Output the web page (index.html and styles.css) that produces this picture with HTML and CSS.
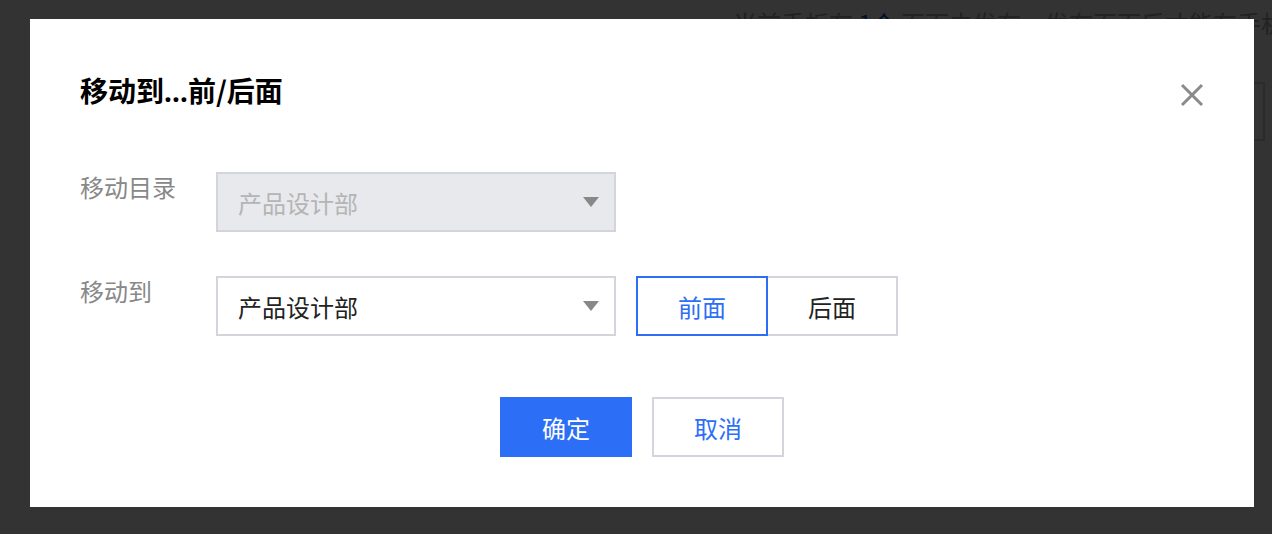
FILE: index.html
```html
<!DOCTYPE html>
<html lang="zh-CN">
<head>
<meta charset="utf-8">
<title>移动到…前/后面</title>
<link rel="stylesheet" href="styles.css">
</head>
<body>
  <div class="page">
    <p class="notice">当前手板有 <span class="num">1个</span> 页面未发布，发布页面后才能在手机</p>
    <div class="bg-input"></div>
  </div>
  <div class="mask"></div>
  <div class="dialog">
    <div class="dialog-header">
      <h2 class="dialog-title">移动到<span class="ellipsis">…</span>前/后面</h2>
      <button class="close" aria-label="关闭">
        <svg width="24" height="24" viewBox="0 0 24 24"><path d="M2 2 L22 22 M22 2 L2 22" stroke="#8a8a8a" stroke-width="3" fill="none"/></svg>
      </button>
    </div>
    <div class="form">
      <div class="row">
        <label class="label">移动目录</label>
        <div class="select disabled"><span class="value">产品设计部</span><i class="arrow"></i></div>
      </div>
      <div class="row">
        <label class="label">移动到</label>
        <div class="select"><span class="value">产品设计部</span><i class="arrow"></i></div>
        <div class="seg">
          <button class="seg-btn active">前面</button>
          <button class="seg-btn">后面</button>
        </div>
      </div>
    </div>
    <div class="footer">
      <button class="btn primary">确定</button>
      <button class="btn">取消</button>
    </div>
  </div>
</body>
</html>
```

FILE: styles.css
```css
* { box-sizing: border-box; }
html, body { margin: 0; padding: 0; }
body {
  width: 1272px;
  height: 534px;
  overflow: hidden;
  background: #ffffff;
  font-family: "Noto Sans CJK SC", "Noto Sans", sans-serif;
}
.page {
  display: flex;
  flex-direction: column;
  padding-top: 11px;
}
.notice {
  margin: 0 0 0 733px;
  font-size: 24px;
  line-height: 24px;
  color: #a8a8a8;
  white-space: nowrap;
  overflow: hidden;
  width: 539px;
}
.notice .num { color: #0b4fc6; }
.bg-input {
  margin: 47px 0 0 760px;
  width: 505px;
  height: 59px;
  border: 2px solid #d5d5d5;
}
.mask {
  position: fixed;
  inset: 0;
  background: rgba(0, 0, 0, 0.8);
}
.dialog {
  position: fixed;
  left: 30px;
  top: 19px;
  width: 1224px;
  height: 488px;
  background: #fff;
  padding: 57px 50px 50px 50px;
  display: flex;
  flex-direction: column;
}
.dialog-header {
  display: flex;
  justify-content: space-between;
  align-items: flex-start;
}
.dialog-title {
  margin: 0;
  font-size: 28px;
  line-height: 28px;
  font-weight: 700;
  color: #000;
}
.ellipsis {
  font-family: "Noto Sans", "DejaVu Sans", sans-serif;
  letter-spacing: 0;
}
.close {
  margin-top: 7px;
  padding: 0;
  border: 0;
  background: none;
  width: 24px;
  height: 24px;
  display: block;
}
.close svg { display: block; }
.form {
  margin-top: 65px;
  display: flex;
  flex-direction: column;
  gap: 44px;
}
.row {
  display: flex;
  align-items: flex-start;
}
.label {
  width: 136px;
  padding-top: 3px;
  font-size: 24px;
  line-height: 24px;
  color: #888;
}
.select {
  width: 400px;
  height: 60px;
  border: 2px solid #d3d5dd;
  background: #fff;
  padding: 0 15px 0 20px;
  display: flex;
  align-items: center;
  justify-content: space-between;
  font-size: 24px;
  color: #222;
}
.select.disabled {
  background: #e8e9ed;
  color: #b4b4b4;
}
.arrow {
  width: 0;
  height: 0;
  border-left: 8px solid transparent;
  border-right: 8px solid transparent;
  border-top: 10px solid #888;
}
.seg {
  display: flex;
  margin-left: 20px;
}
.seg-btn {
  width: 132px;
  height: 60px;
  border: 2px solid #d3d5dd;
  background: #fff;
  font-family: inherit;
  font-size: 24px;
  color: #222;
  padding: 0;
}
.seg-btn + .seg-btn { margin-left: -2px; }
.seg-btn.active {
  border-color: #2c6ff6;
  color: #2c6ff6;
  position: relative;
  z-index: 1;
}
.footer {
  margin-top: 61px;
  display: flex;
  justify-content: center;
  gap: 20px;
}
.btn {
  width: 132px;
  height: 60px;
  border: 2px solid #d3d5dd;
  background: #fff;
  color: #2c6ff6;
  font-family: inherit;
  font-size: 24px;
  padding: 0;
}
.btn.primary {
  background: #2c6ff6;
  border-color: #2c6ff6;
  color: #fff;
}
```
